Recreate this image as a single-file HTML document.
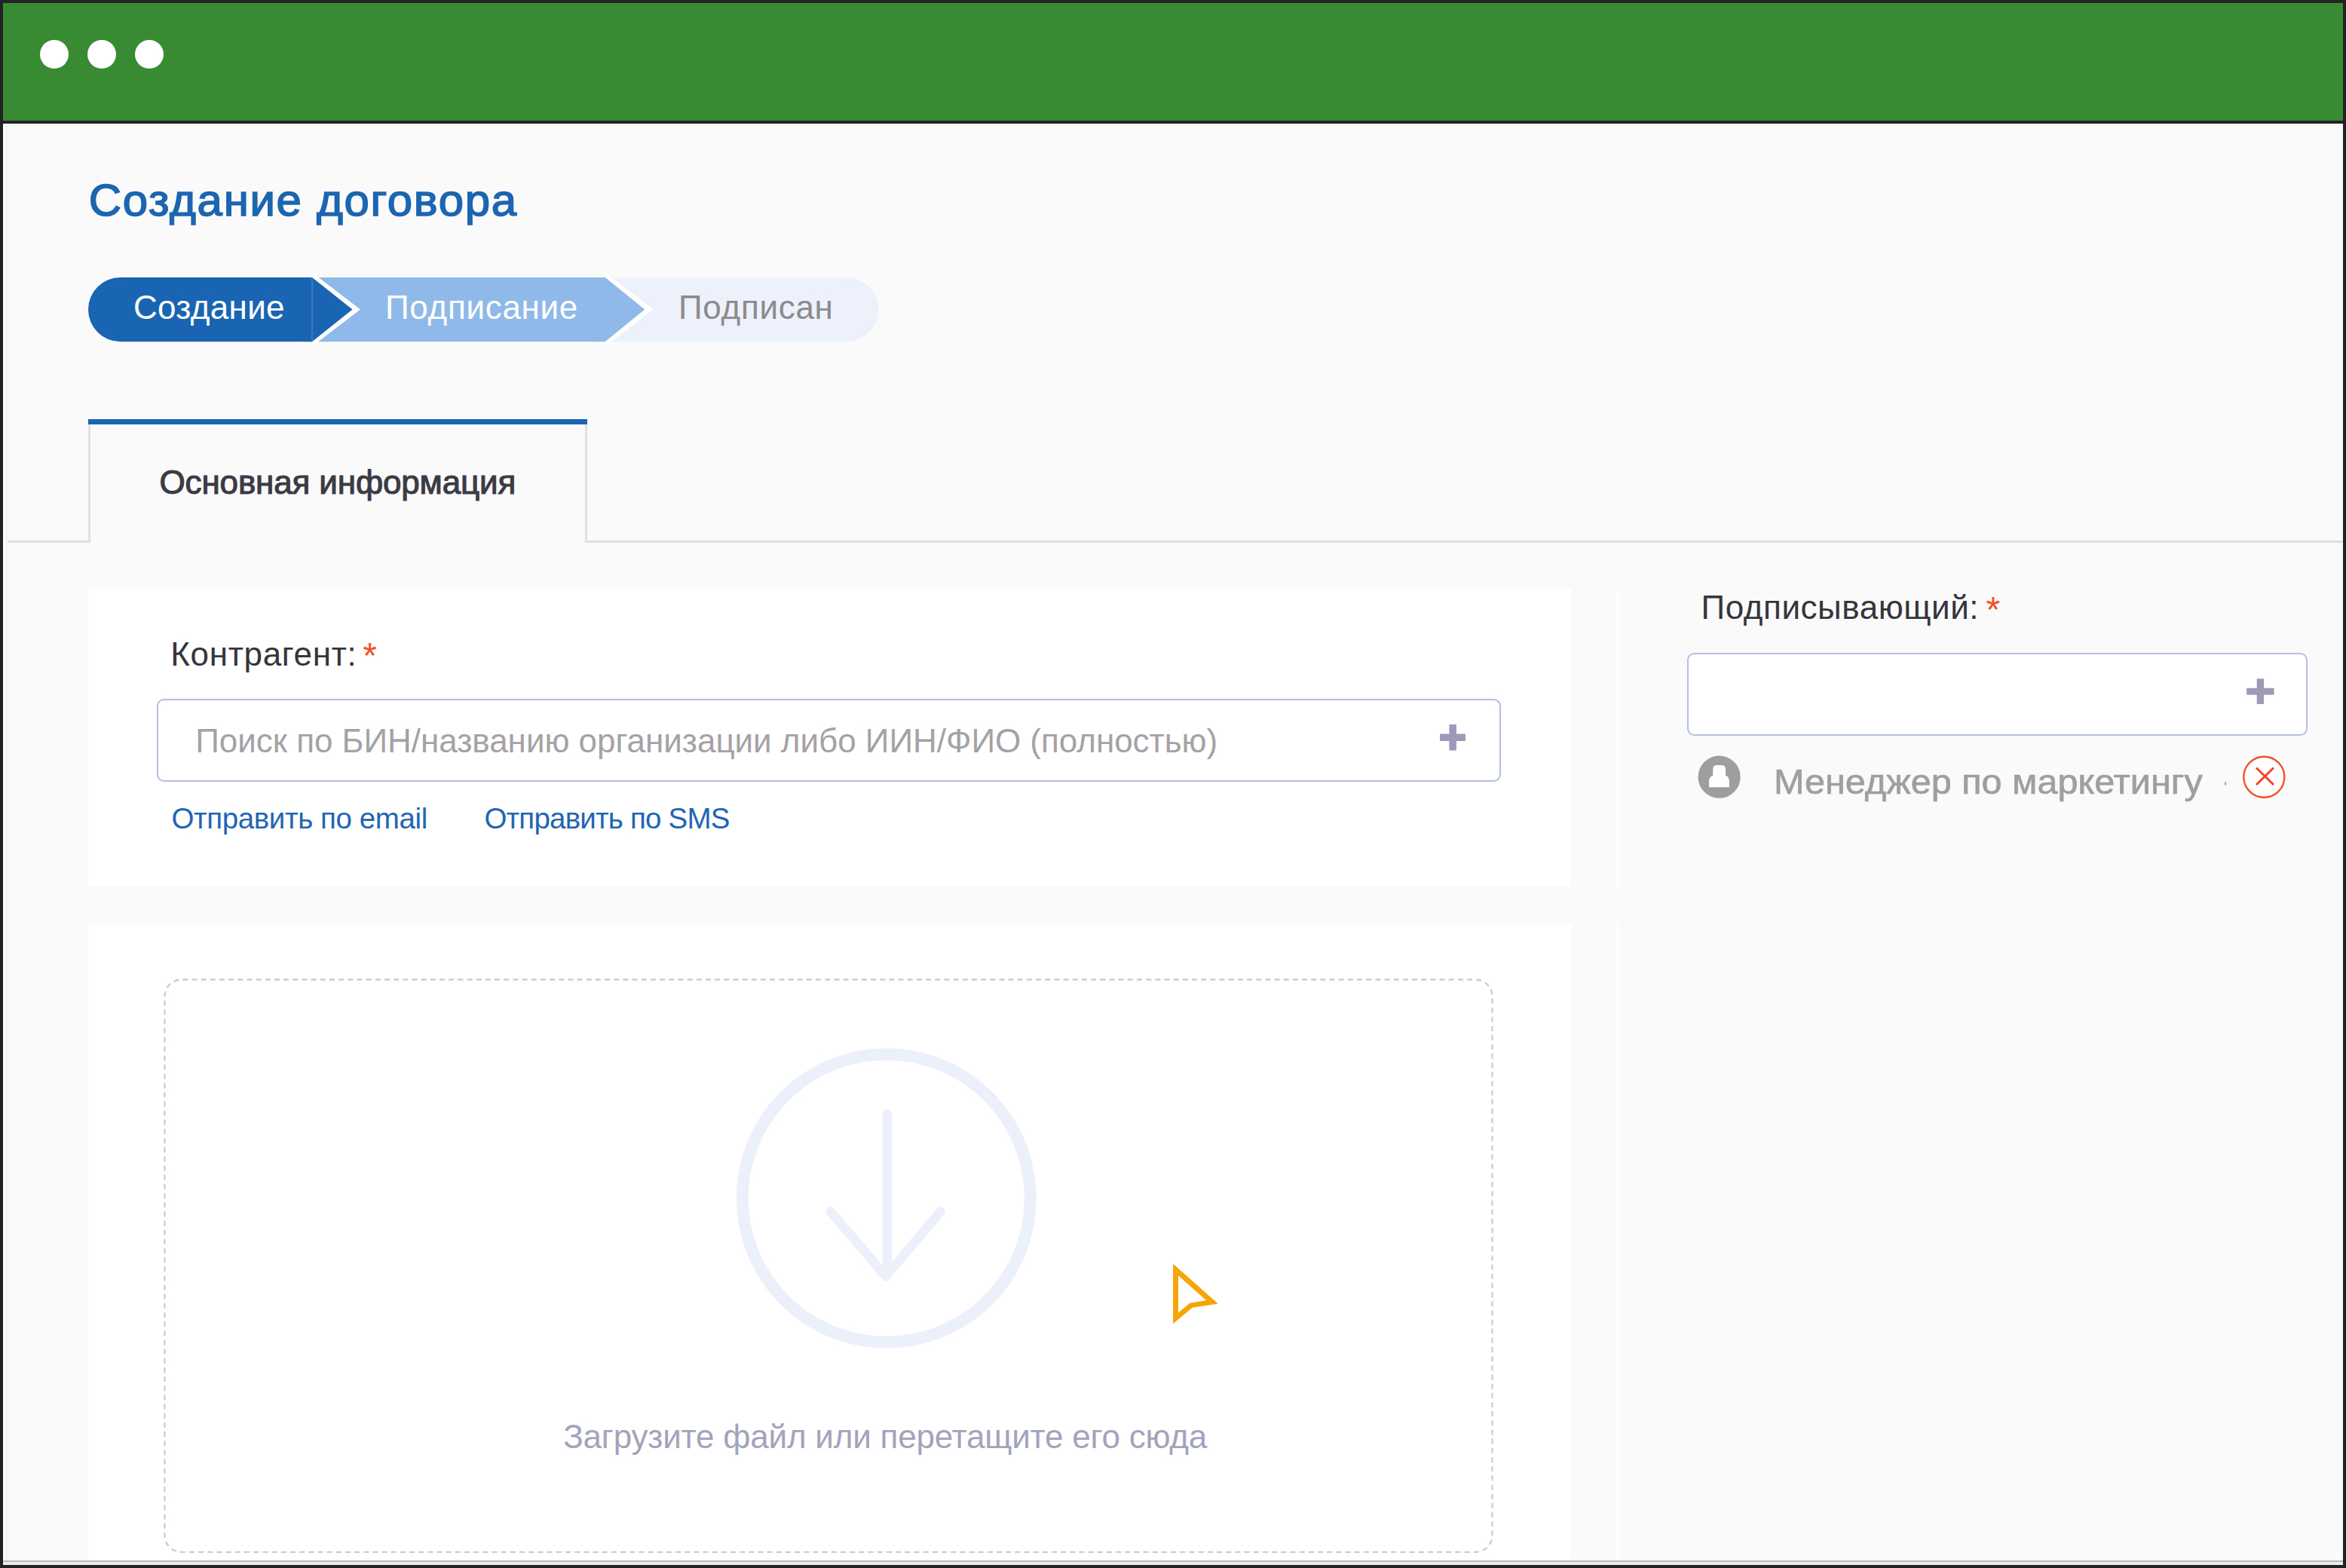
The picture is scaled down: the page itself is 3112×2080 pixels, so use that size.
<!DOCTYPE html>
<html lang="ru">
<head>
<meta charset="utf-8">
<title>Создание договора</title>
<style>
  html, body { margin: 0; padding: 0; }
  body {
    width: 3112px; height: 2080px; overflow: hidden; position: relative;
    background: #222222;
    font-family: "Liberation Sans", sans-serif;
  }
  .abs { position: absolute; }
  .t { position: absolute; white-space: nowrap; line-height: 1; transform-origin: 0 0; }
  #bar { left: 4px; top: 4px; width: 3104px; height: 156px; background: #388b32; }
  .dot { width: 38.3px; height: 38.6px; border-radius: 50%; background: #ffffff; top: 52.9px; }
  #page { left: 4px; top: 164px; width: 3104px; height: 1909px; background: #fafafa; overflow: hidden; }
  #leftstrip { left: 4px; top: 164px; width: 4.2px; height: 1909px; background: #fdfdfd; border-right: 1.3px solid #e9e9f1; }
  #tabline1 { left: 10px; top: 717px; width: 109.6px; height: 2.7px; background: #dfdfe0; }
  #tabline2 { left: 776.3px; top: 717px; width: 2331.7px; height: 2.7px; background: #dfdfe0; }
  #tabl { left: 117px; top: 563px; width: 2.6px; height: 156.7px; background: #e0e0e2; }
  #tabr { left: 776.3px; top: 563px; width: 2.6px; height: 156.7px; background: #e0e0e2; }
  #tabtop { left: 117px; top: 556px; width: 661.9px; height: 7.3px; background: #1b65b5; }
  .card { background: #ffffff; }
  #card1 { left: 117px; top: 781px; width: 1967px; height: 395px; }
  #card2 { left: 117px; top: 1225px; width: 1967px; height: 860px; }
  .vsep { left: 2143.8px; width: 4px; background: #fefefe; }
  .inp { background: #ffffff; border: 2.4px solid #b3bfe5; border-radius: 9.5px; box-sizing: border-box; }
  #inp1 { left: 207.7px; top: 927px; width: 1782.9px; height: 109.8px; }
  #inp2 { left: 2238.1px; top: 866.1px; width: 822.7px; height: 109.8px; }
</style>
</head>
<body>
<div id="bar" class="abs"></div>
<div class="abs dot" style="left:52.8px"></div>
<div class="abs dot" style="left:115.8px"></div>
<div class="abs dot" style="left:178.8px"></div>
<div id="page" class="abs"></div>
<div id="leftstrip" class="abs"></div>

<!-- title -->
<div class="t" id="title" style="left:117.8px; top:235.8px; font-size:60px; color:#1b65b1; -webkit-text-stroke:1.6px #1b65b1; letter-spacing:1.65px;">Создание договора</div>

<!-- stepper -->
<svg class="abs" id="stepper" style="left:100px; top:350px;" width="1100" height="120" viewBox="100 350 1100 120">
  <path d="M790 368 H1122.8 A42.6 42.6 0 0 1 1122.8 453.2 H790 Z" fill="#ecf1fb"/>
  <path d="M802.7 361.5 L866.7 410.5 L802.7 459.5 Z" fill="#ffffff"/>
  <path d="M405 368 H802.7 L855.2 410.6 L802.7 453.2 H405 Z" fill="#8fb9e8"/>
  <path d="M414 361.5 L478 410.5 L414 459.5 Z" fill="#ffffff"/>
  <path d="M159.6 368 H414 L467.5 410.6 L414 453.2 H159.6 A42.6 42.6 0 0 1 159.6 368 Z" fill="#1a65b3"/>
  <rect x="413.4" y="368" width="1.2" height="85.2" fill="#4f86c4"/>
</svg>
<div class="t" id="st1" style="letter-spacing:0.3px; left:177px; top:386px; font-size:44px; color:#ffffff;">Создание</div>
<div class="t" id="st2" style="letter-spacing:0.7px; left:511px; top:386px; font-size:44px; color:#ffffff;">Подписание</div>
<div class="t" id="st3" style="letter-spacing:0.7px; left:900px; top:386px; font-size:44px; color:#8c8a8a;">Подписан</div>

<!-- tabs -->
<div id="tabline1" class="abs"></div>
<div id="tabline2" class="abs"></div>
<div id="tabl" class="abs"></div>
<div id="tabr" class="abs"></div>
<div id="tabtop" class="abs"></div>
<div class="t" id="tabtxt" style="left:211.5px; top:618.1px; font-size:44px; color:#3b3b45; -webkit-text-stroke:1.1px #3b3b45; letter-spacing:-0.15px;">Основная информация</div>

<!-- cards -->
<div id="card1" class="abs card"></div>
<div id="card2" class="abs card"></div>
<div class="abs vsep" style="top:781px; height:395px;"></div>
<div class="abs vsep" style="top:1225px; height:850px;"></div>

<div class="t" id="lbl1" style="left:226.3px; top:845.6px; font-size:44px; letter-spacing:0.67px; color:#35353b;">Контрагент:</div>
<div class="t" id="ast1" style="left:481.3px; top:845.5px; font-size:48px; color:#f4502c;">*</div>
<div id="inp1" class="abs inp"></div>
<div class="t" id="ph1" style="left:259.2px; top:960.5px; font-size:44px; letter-spacing:-0.03px; color:#a5a2a6;">Поиск по БИН/названию организации либо ИИН/ФИО (полностью)</div>
<div class="t" id="lnk1" style="left:227.5px; top:1067.3px; font-size:38.5px; letter-spacing:-0.4px; color:#2166b3;">Отправить по email</div>
<div class="t" id="lnk2" style="left:642.4px; top:1067.3px; font-size:38.5px; letter-spacing:-0.8px; color:#2166b3;">Отправить по SMS</div>

<div class="t" id="lbl2" style="left:2256.6px; top:784.4px; font-size:44px; letter-spacing:0.55px; color:#35353b;">Подписывающий:</div>
<div class="t" id="ast2" style="left:2634.6px; top:784.5px; font-size:48px; color:#f4502c;">*</div>
<div id="inp2" class="abs inp"></div>
<div class="t" id="mgr" style="left:2352.5px; top:1014px; font-size:46px; color:#9f9f9f; -webkit-text-stroke:0.7px #9f9f9f; transform:scaleX(1.056); filter:blur(0.7px);">Менеджер по маркетингу</div>

<div class="t" id="drop" style="left:747.2px; top:1883.5px; font-size:44px; color:#a2a4bb; letter-spacing:-0.21px;">Загрузите файл или перетащите его сюда</div>


<!-- plus icons -->
<svg class="abs" style="left:1905px; top:956px;" width="44" height="44" viewBox="1905 956 44 44">
  <path d="M1922.4 961.1 h9.5 v12.5 h12 v9.3 h-12 v12.5 h-9.5 v-12.5 h-12.3 v-9.3 h12.3 Z" fill="#9d99b7"/>
</svg>
<svg class="abs" style="left:2975px; top:895px;" width="46" height="46" viewBox="2975 895 46 46">
  <path d="M2993.7 900.2 h9.4 v12.6 h13.5 v9 h-13.5 v12.2 h-9.4 v-12.2 h-13.5 v-9 h13.5 Z" fill="#9d99b7"/>
</svg>

<!-- avatar -->
<svg class="abs" style="left:2248px; top:998px; filter:blur(0.5px);" width="66" height="66" viewBox="2248 998 66 66">
  <circle cx="2280.6" cy="1030.7" r="28.1" fill="#9f9e9d"/>
  <path d="M2267 1044.2 V1036.5 Q2267 1030.5 2272.2 1028.8 V1020.5 Q2272.2 1015 2277.7 1015 H2283.5 Q2289 1015 2289 1020.5 V1028.8 Q2293.9 1030.5 2293.9 1036.5 V1044.2 Z" fill="#ffffff"/>
</svg>

<!-- remove (red x) -->
<svg class="abs" style="left:2946px; top:998px; filter:blur(0.4px);" width="92" height="66" viewBox="2946 998 92 66">
  <rect x="2951" y="1037" width="2.2" height="4.8" fill="#8fb3e0"/>
  <circle cx="3003.3" cy="1030.8" r="27" fill="#ffffff" stroke="#f4502c" stroke-width="2.4"/>
  <path d="M2993 1018.5 L3016 1041 M3016 1018.5 L2993 1041" stroke="#f4432b" stroke-width="3" fill="none"/>
</svg>

<!-- dropzone -->
<svg class="abs" style="left:210px; top:1292px;" width="1780" height="790" viewBox="210 1292 1780 790">
  <rect x="218.5" y="1299.5" width="1761" height="759.3" rx="22" ry="22" fill="none" stroke="#c6cde1" stroke-width="2.3" stroke-dasharray="7 5.17" stroke-dashoffset="-1.8"/>
  <circle cx="1175.8" cy="1589.5" r="191" fill="none" stroke="#ebf0fb" stroke-width="16"/>
  <path d="M1176.8 1478 V1690" stroke="#ebf0fb" stroke-width="12.6" stroke-linecap="round" fill="none"/>
  <path d="M1101.7 1607 L1175 1693 L1247.6 1607" stroke="#ebf0fb" stroke-width="12.6" stroke-linecap="round" stroke-linejoin="round" fill="none"/>
  <path fill-rule="evenodd" fill="#f5a506" d="M1556.1 1676.4 L1615.8 1729.4 L1581.8 1734.4 L1556.1 1756.1 Z M1563 1691.9 L1600.1 1724.9 L1578.5 1728.4 L1563 1741.2 Z"/>
</svg>

<div class="abs" style="left:4px; top:2070px; width:3104px; height:2px; background:#b9b9b9;"></div>
<div class="abs" style="left:4px; top:2072px; width:3104px; height:4px; background:#ececec;"></div>
<div class="abs" style="left:0; top:2076px; width:3112px; height:4px; background:#222222;"></div>

</body>
</html>
